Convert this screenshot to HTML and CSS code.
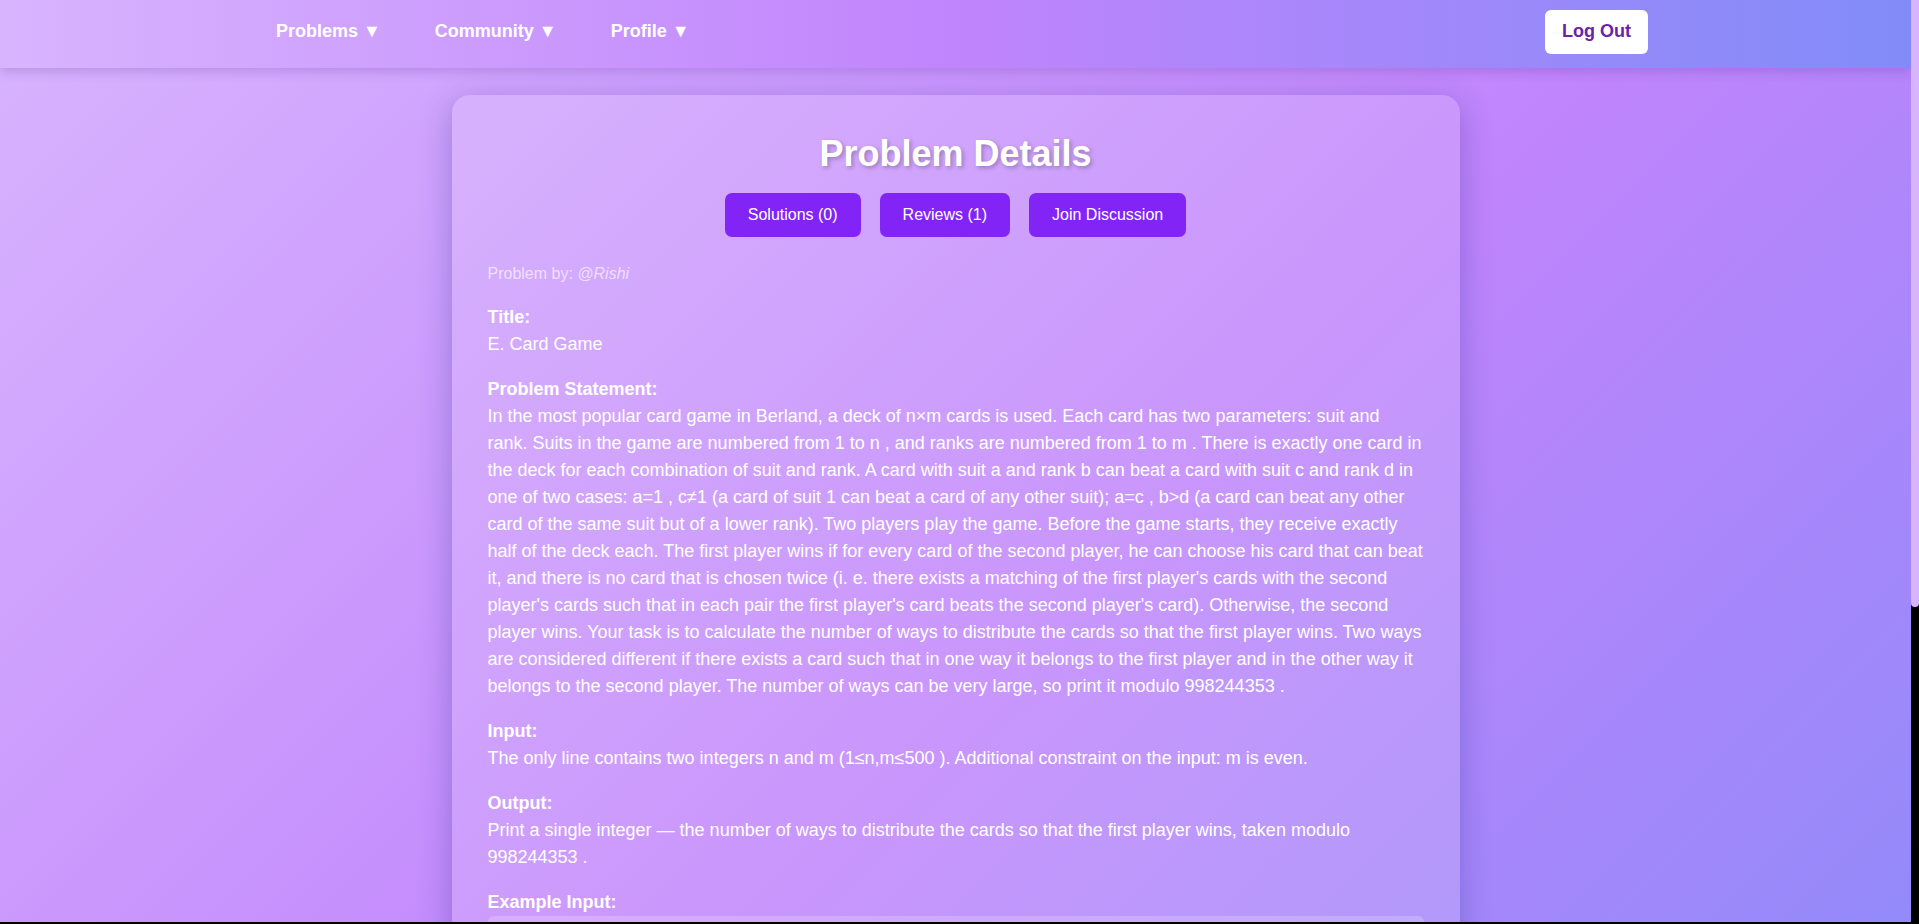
FILE: index.html
```html
<!DOCTYPE html>
<html lang="en">
<head>
<meta charset="utf-8">
<title>Problem Details</title>
<link rel="stylesheet" href="styles.css">
</head>
<body>
<nav class="navbar">
  <ul class="nav-links">
    <li class="nav-item">Problems ▼</li>
    <li class="nav-item">Community ▼</li>
    <li class="nav-item">Profile ▼</li>
  </ul>
  <button class="logout-btn">Log Out</button>
</nav>

<main class="card">
  <h2 class="card-title">Problem Details</h2>
  <div class="actions">
    <button class="action-btn">Solutions (0)</button>
    <button class="action-btn">Reviews (1)</button>
    <button class="action-btn">Join Discussion</button>
  </div>
  <p class="author">Problem by: <em>@Rishi</em></p>

  <div class="section">
    <strong class="label">Title:</strong>
    <div>E. Card Game</div>
  </div>
  <div class="section">
    <strong class="label">Problem Statement:</strong>
    <div>In the most popular card game in Berland, a deck of n×m cards is used. Each card has two parameters: suit and rank. Suits in the game are numbered from 1 to n , and ranks are numbered from 1 to m . There is exactly one card in the deck for each combination of suit and rank. A card with suit a and rank b can beat a card with suit c and rank d in one of two cases: a=1 , c≠1 (a card of suit 1 can beat a card of any other suit); a=c , b&gt;d (a card can beat any other card of the same suit but of a lower rank). Two players play the game. Before the game starts, they receive exactly half of the deck each. The first player wins if for every card of the second player, he can choose his card that can beat it, and there is no card that is chosen twice (i. e. there exists a matching of the first player's cards with the second player's cards such that in each pair the first player's card beats the second player's card). Otherwise, the second player wins. Your task is to calculate the number of ways to distribute the cards so that the first player wins. Two ways are considered different if there exists a card such that in one way it belongs to the first player and in the other way it belongs to the second player. The number of ways can be very large, so print it modulo 998244353 .</div>
  </div>
  <div class="section">
    <strong class="label">Input:</strong>
    <div>The only line contains two integers n and m (1≤n,m≤500 ). Additional constraint on the input: m is even.</div>
  </div>
  <div class="section">
    <strong class="label">Output:</strong>
    <div>Print a single integer — the number of ways to distribute the cards so that the first player wins, taken modulo 998244353 .</div>
  </div>
  <div class="section">
    <strong class="label">Example Input:</strong>
    <pre class="example">1 4</pre>
  </div>
  <div class="section">
    <strong class="label">Example Output:</strong>
    <pre class="example">2</pre>
  </div>
  <div class="section">
    <strong class="label">Time Limit:</strong>
    <div>2 seconds</div>
  </div>
  <div class="section">
    <strong class="label">Memory Limit:</strong>
    <div>512 megabytes</div>
  </div>
</main>

<div class="scrollbar" aria-hidden="true"><div class="scrollbar-thumb"></div></div>
<div class="bottom-edge" aria-hidden="true"></div>
</body>
</html>
```
FILE: styles.css
```css
html {
  font-family: "Liberation Sans", Arial, sans-serif;
}

body {
  margin: 0 8px 0 0;
  padding-bottom: 169px;
  background: linear-gradient(135deg, #d8b4fe 0%, #c084fc 50%, #818cf8 100%);
  color: #fff;
}

/* fake window scrollbar (overlay) */
.scrollbar {
  position: fixed;
  top: 0;
  right: 0;
  width: 8px;
  height: 100vh;
  background: #000;
  z-index: 10;
}

.scrollbar-thumb {
  height: 607px;
  background: #d8b4fe;
  border-radius: 0 0 4px 4px;
}

.bottom-edge {
  position: fixed;
  left: 0;
  right: 0;
  bottom: 0;
  height: 2px;
  background: #000;
  z-index: 11;
}

.navbar {
  box-sizing: border-box;
  height: 68px;
  display: flex;
  align-items: flex-start;
  justify-content: space-between;
  padding: 0 263px 0 276px;
  background: linear-gradient(90deg, #d8b4fe 0%, #c084fc 50%, #818cf8 100%);
  box-shadow: 0 4px 10px rgba(60, 20, 120, 0.18);
}

.nav-links {
  display: flex;
  gap: 54px;
  list-style: none;
  margin: 0;
  padding: 21px 0 0;
}

.nav-item {
  font-size: 18px;
  font-weight: bold;
  color: #fff;
  cursor: pointer;
}

.logout-btn {
  margin-top: 10px;
  background: #fff;
  color: #6b21a8;
  border: none;
  border-radius: 6px;
  font-family: inherit;
  font-size: 18px;
  font-weight: bold;
  padding: 11px 17px 12px;
  line-height: normal;
  cursor: pointer;
}

.card {
  display: block;
  width: 936px;
  margin: 27px auto 0;
  padding: 36px;
  background: rgba(255, 255, 255, 0.15);
  border-radius: 18px;
  box-shadow: 0 8px 32px rgba(31, 38, 135, 0.3);
}

.card-title {
  margin: 2px 0 18px;
  font-size: 36px;
  font-weight: bold;
  text-align: center;
  color: #fff;
  text-shadow: 2px 2px 4px rgba(0, 0, 0, 0.25);
}

.actions {
  display: flex;
  justify-content: center;
  gap: 19px;
  margin-bottom: 25px;
}

.action-btn {
  background: #8224f6;
  color: #fff;
  border: none;
  border-radius: 7px;
  font-family: inherit;
  font-size: 16px;
  line-height: 20px;
  padding: 12px 23px;
  cursor: pointer;
}

.author {
  margin: 0 0 18px;
  font-size: 16px;
  line-height: 24px;
  color: rgba(255, 255, 255, 0.65);
}

.section {
  font-size: 18px;
  line-height: 27px;
  margin-bottom: 18px;
}

.section:last-child {
  margin-bottom: 0;
}

.label {
  display: block;
}

.example {
  margin: 0;
  padding: 12px 15px;
  background: rgba(255, 255, 255, 0.2);
  border-radius: 6px;
  font-family: "Liberation Mono", "Courier New", monospace;
  font-size: 16px;
  line-height: 24px;
  color: #fff;
}
```
